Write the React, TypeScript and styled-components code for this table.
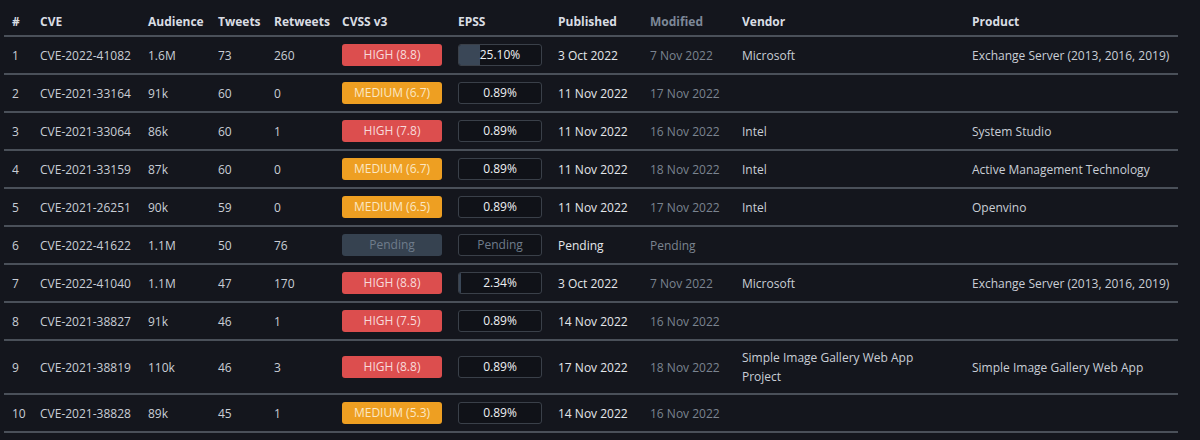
import React from 'react';
import styled, { createGlobalStyle } from 'styled-components';

const GlobalStyle = createGlobalStyle`
  html, body {
    margin: 0;
    padding: 0;
    background: #14161d;
  }
  body {
    font-family: "Open Sans", "Noto Sans", Arial, sans-serif;
    font-size: 12px;
    color: #c9ced6;
  }
`;

type Severity = 'HIGH' | 'MEDIUM' | 'PENDING';

interface CveRow {
  id: string;
  audience: string;
  tweets: number;
  retweets: number;
  severity: Severity;
  score?: string;
  epss?: number;
  published: string;
  modified: string;
  vendor?: string;
  product?: string;
}

const rows: CveRow[] = [
  { id: 'CVE-2022-41082', audience: '1.6M', tweets: 73, retweets: 260, severity: 'HIGH', score: '8.8', epss: 25.1, published: '3 Oct 2022', modified: '7 Nov 2022', vendor: 'Microsoft', product: 'Exchange Server (2013, 2016, 2019)' },
  { id: 'CVE-2021-33164', audience: '91k', tweets: 60, retweets: 0, severity: 'MEDIUM', score: '6.7', epss: 0.89, published: '11 Nov 2022', modified: '17 Nov 2022' },
  { id: 'CVE-2021-33064', audience: '86k', tweets: 60, retweets: 1, severity: 'HIGH', score: '7.8', epss: 0.89, published: '11 Nov 2022', modified: '16 Nov 2022', vendor: 'Intel', product: 'System Studio' },
  { id: 'CVE-2021-33159', audience: '87k', tweets: 60, retweets: 0, severity: 'MEDIUM', score: '6.7', epss: 0.89, published: '11 Nov 2022', modified: '18 Nov 2022', vendor: 'Intel', product: 'Active Management Technology' },
  { id: 'CVE-2021-26251', audience: '90k', tweets: 59, retweets: 0, severity: 'MEDIUM', score: '6.5', epss: 0.89, published: '11 Nov 2022', modified: '17 Nov 2022', vendor: 'Intel', product: 'Openvino' },
  { id: 'CVE-2022-41622', audience: '1.1M', tweets: 50, retweets: 76, severity: 'PENDING', published: 'Pending', modified: 'Pending' },
  { id: 'CVE-2022-41040', audience: '1.1M', tweets: 47, retweets: 170, severity: 'HIGH', score: '8.8', epss: 2.34, published: '3 Oct 2022', modified: '7 Nov 2022', vendor: 'Microsoft', product: 'Exchange Server (2013, 2016, 2019)' },
  { id: 'CVE-2021-38827', audience: '91k', tweets: 46, retweets: 1, severity: 'HIGH', score: '7.5', epss: 0.89, published: '14 Nov 2022', modified: '16 Nov 2022' },
  { id: 'CVE-2021-38819', audience: '110k', tweets: 46, retweets: 3, severity: 'HIGH', score: '8.8', epss: 0.89, published: '17 Nov 2022', modified: '18 Nov 2022', vendor: 'Simple Image Gallery Web App Project', product: 'Simple Image Gallery Web App' },
  { id: 'CVE-2021-38828', audience: '89k', tweets: 45, retweets: 1, severity: 'MEDIUM', score: '5.3', epss: 0.89, published: '14 Nov 2022', modified: '16 Nov 2022' },
];

const columns = [
  { label: '#', width: 28 },
  { label: 'CVE', width: 108 },
  { label: 'Audience', width: 70 },
  { label: 'Tweets', width: 56 },
  { label: 'Retweets', width: 68 },
  { label: 'CVSS v3', width: 116 },
  { label: 'EPSS', width: 100 },
  { label: 'Published', width: 92 },
  { label: 'Modified', width: 92, muted: true },
  { label: 'Vendor', width: 230 },
  { label: 'Product', width: 214 },
];

const Page = styled.div`
  padding: 0 22px 0 4px;
`;

const Table = styled.table`
  width: 1174px;
  table-layout: fixed;
  border-collapse: collapse;
`;

const HeadCell = styled.th<{ muted?: boolean }>`
  text-align: left;
  font-weight: 700;
  line-height: 19px;
  padding: 12px 0 4px 8px;
  color: ${({ muted }) => (muted ? '#7d8898' : '#d9dde3')};
  border-bottom: 2px solid #4a5059;
  white-space: nowrap;
`;

const Row = styled.tr`
  border-bottom: 2px solid #4a5059;
`;

const Cell = styled.td<{ tone?: 'bright' | 'muted'; wrap?: boolean }>`
  padding: ${({ wrap }) => (wrap ? '7px 24px 7px 8px' : '7px 0 7px 8px')};
  line-height: 19px;
  vertical-align: middle;
  white-space: ${({ wrap }) => (wrap ? 'normal' : 'nowrap')};
  color: ${({ tone }) => (tone === 'bright' ? '#e4e7eb' : tone === 'muted' ? '#7b8490' : '#c9ced6')};
`;

const badgeColors: Record<Severity, { bg: string; fg: string }> = {
  HIGH: { bg: '#dc4e4e', fg: '#f8dada' },
  MEDIUM: { bg: '#ee9f22', fg: '#fbe7c4' },
  PENDING: { bg: '#364250', fg: '#6f7c8b' },
};

const Badge = styled.div<{ severity: Severity }>`
  width: 100px;
  height: 22px;
  line-height: 22px;
  border-radius: 3px;
  text-align: center;
  background: ${({ severity }) => badgeColors[severity].bg};
  color: ${({ severity }) => badgeColors[severity].fg};
`;

const EpssBox = styled.div<{ pending?: boolean }>`
  position: relative;
  width: 84px;
  height: 22px;
  box-sizing: border-box;
  border: 1px solid #3a4049;
  border-radius: 3px;
  background: #101218;
  overflow: hidden;
  color: ${({ pending }) => (pending ? '#6f7c8b' : '#eef0f3')};
`;

const EpssFill = styled.div`
  position: absolute;
  left: 0;
  top: 0;
  bottom: 0;
  background: #3a4757;
`;

const EpssLabel = styled.span`
  position: relative;
  display: block;
  text-align: center;
  line-height: 20px;
`;

const App = () => (
  <Page>
    <GlobalStyle />
    <Table>
      <colgroup>
        {columns.map((c) => (
          <col key={c.label} style={{ width: c.width }} />
        ))}
      </colgroup>
      <thead>
        <tr>
          {columns.map((c) => (
            <HeadCell key={c.label} muted={c.muted}>{c.label}</HeadCell>
          ))}
        </tr>
      </thead>
      <tbody>
        {rows.map((r, i) => {
          const pending = r.severity === 'PENDING';
          return (
            <Row key={r.id}>
              <Cell>{i + 1}</Cell>
              <Cell>{r.id}</Cell>
              <Cell>{r.audience}</Cell>
              <Cell>{r.tweets}</Cell>
              <Cell>{r.retweets}</Cell>
              <Cell>
                <Badge severity={r.severity}>
                  {pending ? 'Pending' : `${r.severity} (${r.score})`}
                </Badge>
              </Cell>
              <Cell>
                <EpssBox pending={pending}>
                  {!pending && r.epss! > 1 && <EpssFill style={{ width: `${r.epss}%` }} />}
                  <EpssLabel>{pending ? 'Pending' : `${r.epss!.toFixed(2)}%`}</EpssLabel>
                </EpssBox>
              </Cell>
              <Cell tone="bright">{r.published}</Cell>
              <Cell tone="muted">{r.modified}</Cell>
              <Cell wrap>{r.vendor}</Cell>
              <Cell>{r.product}</Cell>
            </Row>
          );
        })}
      </tbody>
    </Table>
  </Page>
);

export default App;
